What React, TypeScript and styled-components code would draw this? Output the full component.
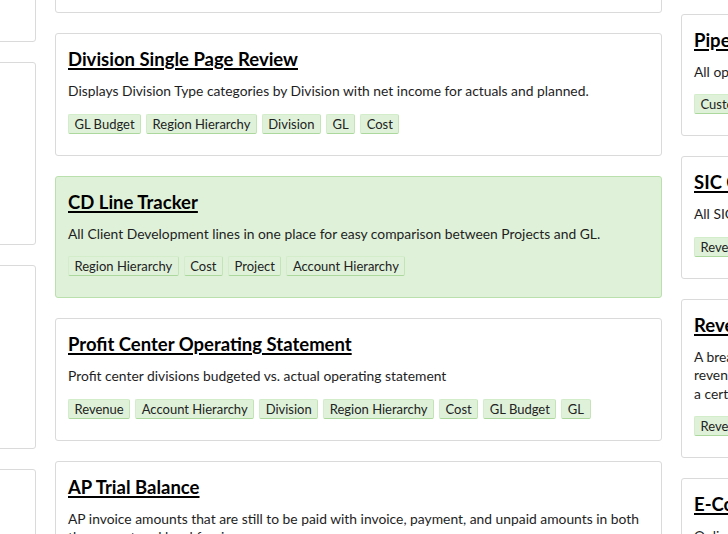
import React from 'react';
import styled, { createGlobalStyle } from 'styled-components';

const GlobalStyle = createGlobalStyle`
  html, body {
    margin: 0;
    padding: 0;
    background: #ffffff;
    overflow: hidden;
  }
  body {
    font-family: Lato, "Open Sans", "Liberation Sans", sans-serif;
    color: #222;
  }
`;

const Viewport = styled.div`
  width: 728px;
  height: 534px;
  overflow: hidden;
`;

/* The board is scrolled: its left column and top rows lie outside the view */
const Board = styled.div`
  display: flex;
  align-items: flex-start;
  gap: 19px;
  margin-left: -571px;
  margin-top: -129px;
`;

const Column = styled.div<{ $shift?: number }>`
  flex: none;
  width: 607px;
  display: flex;
  flex-direction: column;
  gap: 20px;
  padding-top: ${(p) => p.$shift ?? 0}px;
`;

const Card = styled.div<{ $highlight?: boolean }>`
  box-sizing: border-box;
  border: 1px solid ${(p) => (p.$highlight ? '#b9e0ad' : '#dadada')};
  background: ${(p) => (p.$highlight ? '#dff2d9' : '#ffffff')};
  border-radius: 3px;
  padding: 14px 12px 21px 12px;
`;

const Title = styled.a`
  display: block;
  font-size: 18.5px;
  font-weight: 700;
  line-height: 22px;
  color: #000;
  text-decoration: underline;
  text-decoration-thickness: 1.5px;
  text-underline-offset: 2px;
  white-space: nowrap;
  cursor: pointer;
`;

const Description = styled.p`
  margin: 12px 0 0 0;
  font-size: 13.85px;
  line-height: 18.5px;
  color: #1e1e1e;
`;

const Tags = styled.div`
  display: flex;
  flex-wrap: wrap;
  gap: 4px 5px;
  margin-top: 13px;
`;

const Tag = styled.span`
  box-sizing: border-box;
  height: 20px;
  line-height: 18px;
  padding: 0 5.5px;
  font-size: 13px;
  color: #222;
  background: #dff2d9;
  border: 1px solid #d3ecca;
  border-bottom-color: #acd89e;
  border-right-color: #c2e4b7;
  border-radius: 2px;
  white-space: nowrap;
`;

type Item = {
  title: string;
  desc: React.ReactNode;
  tags: string[];
  highlight?: boolean;
};

const left: Item[] = [
  {
    title: 'General Ledger Detail',
    desc: 'Journal entries with source, period and account.',
    tags: [
      'GL', 'Account Hierarchy', 'Division', 'Region Hierarchy', 'Cost', 'GL Budget', 'Revenue',
      'Project', 'Customer', 'Vendor', 'Employee', 'Department', 'Fiscal Calendar', 'Currency',
      'Entity', 'Product', 'Location', 'Segment',
    ],
  },
  {
    title: 'Budget vs. Actual by Department',
    desc: (
      <>
        Monthly budget and actual spend for each department.
        <br />
        Variances are shown in amount and in percent.
        <br />
        Includes forecast for the remaining periods.
      </>
    ),
    tags: [
      'GL Budget', 'Department', 'Cost', 'GL', 'Account Hierarchy', 'Division', 'Region Hierarchy',
      'Employee', 'Fiscal Calendar', 'Entity',
    ],
  },
  {
    title: 'Vendor Spend Analysis',
    desc: (
      <>
        Total spend by vendor across all divisions.
        <br />
        Compares current year with prior year.
        <br />
        Top vendors are ranked by invoice amount.
      </>
    ),
    tags: [
      'Vendor', 'Cost', 'Division', 'AP', 'Account Hierarchy', 'Region Hierarchy', 'GL',
      'Invoice', 'Payment', 'Currency',
    ],
  },
  {
    title: 'Cash Flow Summary',
    desc: 'Operating, investing and financing cash flows.',
    tags: ['GL', 'Account Hierarchy'],
  },
];

const middle: Item[] = [
  {
    title: 'Income Statement by Region',
    desc: (
      <>
        Revenue, cost and net income by region for the current year.
        <br />
        Compared with the plan and the prior year.
      </>
    ),
    tags: ['Region Hierarchy', 'GL', 'Revenue', 'Cost'],
  },
  {
    title: 'Division Single Page Review',
    desc: 'Displays Division Type categories by Division with net income for actuals and planned.',
    tags: ['GL Budget', 'Region Hierarchy', 'Division', 'GL', 'Cost'],
  },
  {
    title: 'CD Line Tracker',
    desc: 'All Client Development lines in one place for easy comparison between Projects and GL.',
    tags: ['Region Hierarchy', 'Cost', 'Project', 'Account Hierarchy'],
    highlight: true,
  },
  {
    title: 'Profit Center Operating Statement',
    desc: 'Profit center divisions budgeted vs. actual operating statement',
    tags: ['Revenue', 'Account Hierarchy', 'Division', 'Region Hierarchy', 'Cost', 'GL Budget', 'GL'],
  },
  {
    title: 'AP Trial Balance',
    desc: (
      <>
        AP invoice amounts that are still to be paid with invoice, payment, and unpaid amounts in both
        <br />
        the current and local foreign currency.
      </>
    ),
    tags: ['Vendor', 'GL', 'Account Hierarchy'],
  },
];

const right: Item[] = [
  {
    title: 'Customer Aging',
    desc: 'Open receivables by customer and aging bucket.',
    tags: ['Customer', 'Revenue'],
  },
  {
    title: 'Pipeline Summary',
    desc: 'All open opportunities in the pipeline by stage and owner.',
    tags: ['Customer', 'Revenue', 'Region Hierarchy'],
  },
  {
    title: 'SIC Code Revenue',
    desc: 'All SIC codes with revenue by customer and year.',
    tags: ['Revenue', 'Customer'],
  },
  {
    title: 'Revenue by Customer',
    desc: (
      <>
        A breakdown of revenue by customer and product line for the selected period,
        <br />
        revenue type and region, showing the customers that contributed more than
        <br />
        a certain share of the total.
      </>
    ),
    tags: ['Revenue', 'Customer', 'Division'],
  },
  {
    title: 'E-Commerce Sales',
    desc: 'Online orders and revenue by channel.',
    tags: ['Revenue', 'Product'],
  },
];

const columns: { items: Item[]; shift: number }[] = [
  { items: left, shift: 0 },
  { items: middle, shift: 1 },
  { items: right, shift: 0 },
];

function ReportCard({ item }: { item: Item }) {
  return (
    <Card $highlight={item.highlight}>
      <Title>{item.title}</Title>
      <Description>{item.desc}</Description>
      <Tags>
        {item.tags.map((t, i) => (
          <Tag key={i}>{t}</Tag>
        ))}
      </Tags>
    </Card>
  );
}

export default function App() {
  return (
    <Viewport>
      <GlobalStyle />
      <Board>
        {columns.map((col, ci) => (
          <Column key={ci} $shift={col.shift}>
            {col.items.map((item, i) => (
              <ReportCard key={i} item={item} />
            ))}
          </Column>
        ))}
      </Board>
    </Viewport>
  );
}
